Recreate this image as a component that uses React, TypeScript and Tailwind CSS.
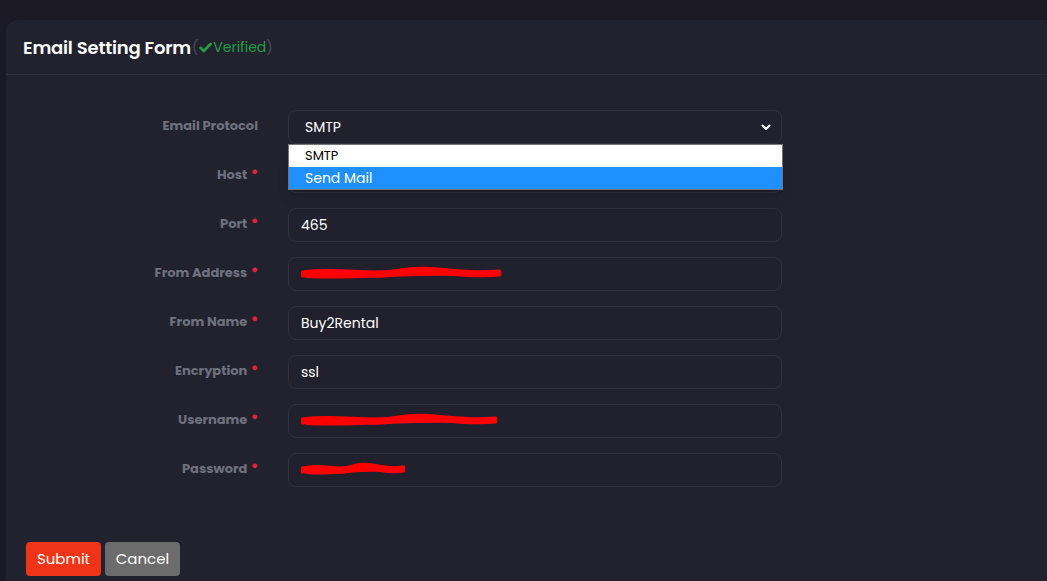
import React from 'react';

const font = { fontFamily: '"Poppins", "Noto Sans", "Open Sans", sans-serif' };

function Scribble({ width }: { width: number }) {
  return (
    <svg width={width} height="16" viewBox={`0 0 ${width} 16`} className="block">
      <path
        d={`M2 8 C ${width * 0.2} 3, ${width * 0.35} 12, ${width * 0.5} 6 S ${width * 0.8} 11, ${width - 2} 7`}
        stroke="#ff0000"
        strokeWidth="7"
        fill="none"
        strokeLinecap="round"
      />
      <path
        d={`M6 10 C ${width * 0.3} 13, ${width * 0.6} 4, ${width - 8} 9`}
        stroke="#ff0000"
        strokeWidth="4"
        fill="none"
        strokeLinecap="round"
      />
    </svg>
  );
}

function Row({ label, required, children }: { label: string; required?: boolean; children: React.ReactNode }) {
  return (
    <div className="flex items-center h-[34px]">
      <div className="w-[252px] flex justify-end items-start -mt-[3px]">
        <span className="text-[13px] font-bold text-[#6e717f]">{label}</span>
        {required && <span className="text-[#e2223f] text-[11px] ml-[4px] leading-none mt-[1px]">●</span>}
      </div>
      <div className="ml-[30px] w-[494px] relative">{children}</div>
    </div>
  );
}

function Field({ children }: { children?: React.ReactNode }) {
  return (
    <div className="h-[34px] rounded-lg border border-[#30303f] bg-[#21202d] flex items-center px-[12px] text-[14px] text-white">
      {children}
    </div>
  );
}

export default function App() {
  return (
    <div className="min-h-screen bg-[#1a1924] pt-[20px] pl-[6px] overflow-hidden" style={font}>
      <div className="bg-[#22212e] rounded-tl-xl min-h-[561px]">
        {/* header */}
        <div className="h-[55px] border-b border-[#2e2d3b] flex items-center pl-[17px]">
          <h2 className="text-[18px] font-semibold text-white tracking-[-0.2px]">Email Setting Form</h2>
          <span className="text-[14px] text-[#4a4957] ml-[1px]">(</span>
          <svg width="13" height="11" viewBox="0 0 13 11" className="mx-[1px]">
            <path d="M1.5 5.8 L4.8 9 L11.5 2" stroke="#1fa045" strokeWidth="2.6" fill="none" strokeLinecap="round" strokeLinejoin="round" />
          </svg>
          <span className="text-[14px] text-[#1fa045]">Verified</span>
          <span className="text-[14px] text-[#4a4957]">)</span>
        </div>

        {/* form */}
        <div className="pt-[35px] flex flex-col gap-[15px]">
          <Row label="Email Protocol">
            <Field>
              <span className="flex-1 pl-[4px]">SMTP</span>
              <svg width="10" height="7" viewBox="0 0 10 7" className="mr-[-2px]">
                <path d="M1.5 1.5 L5 5 L8.5 1.5" stroke="#ffffff" strokeWidth="2" fill="none" strokeLinecap="round" strokeLinejoin="round" />
              </svg>
            </Field>
            <div className="absolute left-0 top-[34px] w-[495px] z-10 border border-[#767676] bg-white shadow-lg">
              <div className="h-[22px] flex items-center pl-[16px] text-[13px] text-black">SMTP</div>
              <div className="h-[22px] flex items-center pl-[16px] text-[14px] text-white bg-[#1e90ff]">Send Mail</div>
            </div>
          </Row>
          <Row label="Host" required>
            <Field />
          </Row>
          <Row label="Port" required>
            <Field>465</Field>
          </Row>
          <Row label="From Address" required>
            <Field>
              <Scribble width={200} />
            </Field>
          </Row>
          <Row label="From Name" required>
            <Field>Buy2Rental</Field>
          </Row>
          <Row label="Encryption" required>
            <Field>ssl</Field>
          </Row>
          <Row label="Username" required>
            <Field>
              <Scribble width={196} />
            </Field>
          </Row>
          <Row label="Password" required>
            <Field>
              <Scribble width={104} />
            </Field>
          </Row>
        </div>

        {/* actions */}
        <div className="flex gap-[4px] pl-[20px] pt-[55px]">
          <button className="w-[75px] h-[34px] rounded-sm bg-[#ef3418] text-white text-[15px]">Submit</button>
          <button className="w-[75px] h-[34px] rounded-sm bg-[#6c6c6c] text-white text-[15px]">Cancel</button>
        </div>
      </div>
    </div>
  );
}
